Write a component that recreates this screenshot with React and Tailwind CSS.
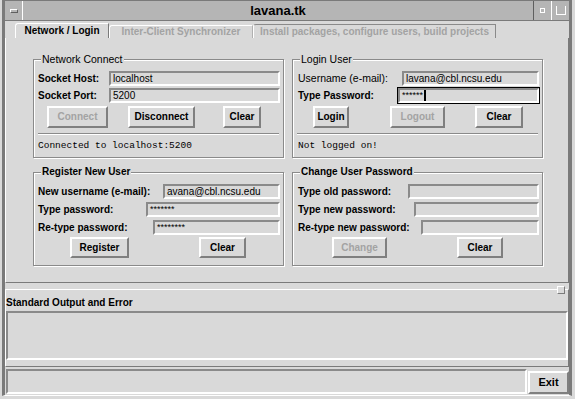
import React from "react";

// raised / sunken Tk-style bevels
const raised = "border-2 border-t-white border-l-white border-b-[#7f7f7f] border-r-[#7f7f7f]";
const sunken = "border-2 border-t-[#8a8a8a] border-l-[#8a8a8a] border-b-white border-r-white";

const Entry = ({ w, value = "", focus = false, dots = false }) => (
  <div className={`${w} h-[17px] p-px ${focus ? "bg-black" : ""}`}>
    <div className={`h-full bg-[#d9d9d9] ${sunken} flex items-center pl-[2px] overflow-hidden whitespace-nowrap`}>
      {dots ? (
        <span className="text-[9px] leading-none self-start mt-[1px]">{value}</span>
      ) : (
        <span className="text-[10px] leading-none">{value}</span>
      )}
      {focus && <span className="ml-[1px] w-[2px] h-[11px] bg-black" />}
    </div>
  </div>
);

const Btn = ({ w, ml, label, disabled = false }) => (
  <div className={`${w} ${ml} h-full bg-[#d9d9d9] ${raised} flex items-center justify-center font-bold text-[10px] ${disabled ? "text-[#a3a3a3]" : "text-black"}`}>
    {label}
  </div>
);

const Row = ({ label, bold = true, children }) => (
  <div className="h-[17px] flex items-center">
    <span className={`flex-1 whitespace-nowrap ${bold ? "font-bold text-[10px]" : "text-[10.5px]"}`}>{label}</span>
    {children}
  </div>
);

const Group = ({ title, bold = false, children }) => (
  <div className="relative border border-[#8a8a8a] shadow-[inset_1px_1px_0_white,1px_1px_0_white] flex flex-col">
    <span className={`absolute left-[7px] -top-[7px] px-px bg-[#d9d9d9] leading-[12px] whitespace-nowrap ${bold ? "font-bold text-[10px]" : "text-[10.5px]"}`}>
      {title}
    </span>
    {children}
  </div>
);

const Separator = () => <div className="mt-[5px] mx-[4px] h-[2px] border-t border-t-[#8a8a8a] border-b border-b-white" />;

export default function App() {
  return (
    <div className="w-[575px] h-[399px] bg-[#d9d9d9] overflow-hidden font-['Liberation_Sans',Arial,sans-serif] text-black leading-none">
      <div className="ml-[2px] w-[570px] h-[396px] border-l-[3px] border-r-[3px] border-t border-[#7a7a7a] border-b border-b-white flex flex-col">
        {/* title bar */}
        <div className="h-[20px] flex bg-[#b5b5b5] border-b border-[#7a7a7a]">
          <div className="w-[18px] border-r border-r-white flex items-center justify-center">
            <div className="w-[8px] h-[4px] border-t border-l border-white border-b border-r border-b-[#5f5f5f] border-r-[#5f5f5f]" />
          </div>
          <div className="flex-1 flex items-center justify-center font-bold text-[13px]">lavana.tk</div>
          <div className="w-[18px] border-l border-l-[#5f5f5f] flex items-center justify-center">
            <div className="w-[5px] h-[5px] border border-white" />
          </div>
          <div className="w-[18px] border-l border-l-white flex items-center justify-center">
            <div className="w-[10px] h-[9px] border-l border-r border-b border-white" />
          </div>
        </div>

        {/* tabs */}
        <div className="h-[17px] flex items-end pl-[10px]">
          <div className="w-[94px] h-[15px] border-t border-l border-white border-r border-r-[#7a7a7a] rounded-tl-[3px] flex items-center justify-center font-bold text-[10px]">
            Network / Login
          </div>
          <div className="w-[144px] h-[13px] border-t border-l border-white border-r border-r-[#b0b0b0] rounded-tl-[3px] flex items-center justify-center font-bold text-[10px] text-[#a3a3a3]">
            Inter-Client Synchronizer
          </div>
          <div className="w-[243px] h-[14px] border-t border-t-[#8a8a8a] border-l border-l-white border-r border-r-[#8a8a8a] rounded-tl-[3px] flex items-center justify-center font-bold text-[10px] text-[#a3a3a3]">
            Install packages, configure users, build projects
          </div>
        </div>

        {/* notebook page */}
        <div className="h-[245px] border-l border-l-white border-r border-r-[#7a7a7a] border-b border-b-[#7a7a7a] pt-[21px] pl-[27px]">
          <div className="grid grid-cols-[251px_251px] grid-rows-[99px_94px] gap-x-[8px] gap-y-[14px]">
            <Group title="Network Connect">
              <div className="pt-[10px] pl-[4px] pr-[2px] flex flex-col">
                <Row label="Socket Host:"><Entry w="w-[173px]" value="localhost" /></Row>
                <Row label="Socket Port:"><Entry w="w-[173px]" value="5200" /></Row>
              </div>
              <div className="mt-[2px] h-[22px] flex">
                <Btn w="w-[61px]" ml="ml-[13px]" label="Connect" disabled />
                <Btn w="w-[67px]" ml="ml-[20px]" label="Disconnect" />
                <Btn w="w-[38px]" ml="ml-[28px]" label="Clear" />
              </div>
              <Separator />
              <div className="mt-[5px] pl-[4px] h-[12px] flex items-center font-['Liberation_Mono',monospace] text-[9.5px]">
                Connected to localhost:5200
              </div>
            </Group>

            <Group title="Login User">
              <div className="pt-[10px] pl-[5px] pr-[2px] flex flex-col">
                <Row label="Username (e-mail):" bold={false}><Entry w="w-[139px]" value="lavana@cbl.ncsu.edu" /></Row>
                <Row label="Type Password:"><Entry w="w-[143px]" value="******" dots focus /></Row>
              </div>
              <div className="mt-[2px] h-[22px] flex">
                <Btn w="w-[36px]" ml="ml-[20px]" label="Login" />
                <Btn w="w-[55px]" ml="ml-[41px]" label="Logout" disabled />
                <Btn w="w-[48px]" ml="ml-[30px]" label="Clear" />
              </div>
              <Separator />
              <div className="mt-[5px] pl-[5px] h-[12px] flex items-center font-['Liberation_Mono',monospace] text-[9.5px]">
                Not logged on!
              </div>
            </Group>

            <Group title="Register New User" bold>
              <div className="pt-[10px] pl-[4px] pr-[2px] flex flex-col gap-[1px]">
                <Row label="New username (e-mail):"><Entry w="w-[119px]" value="avana@cbl.ncsu.edu" /></Row>
                <Row label="Type password:"><Entry w="w-[136px]" value="*******" dots /></Row>
                <Row label="Re-type password:"><Entry w="w-[129px]" value="********" dots /></Row>
              </div>
              <div className="mt-[1px] h-[21px] flex">
                <Btn w="w-[59px]" ml="ml-[36px]" label="Register" />
                <Btn w="w-[47px]" ml="ml-[70px]" label="Clear" />
              </div>
            </Group>

            <Group title="Change User Password" bold>
              <div className="pt-[10px] pl-[5px] pr-[2px] flex flex-col gap-[1px]">
                <Row label="Type old password:"><Entry w="w-[133px]" /></Row>
                <Row label="Type new password:"><Entry w="w-[127px]" /></Row>
                <Row label="Re-type new password:"><Entry w="w-[120px]" /></Row>
              </div>
              <div className="mt-[1px] h-[21px] flex">
                <Btn w="w-[55px]" ml="ml-[39px]" label="Change" disabled />
                <Btn w="w-[46px]" ml="ml-[70px]" label="Clear" />
              </div>
            </Group>
          </div>
        </div>

        {/* pane sash */}
        <div className="relative h-[6px]">
          <div className="absolute right-[4px] top-[3px] w-[8px] h-[8px] bg-[#d9d9d9] border border-t-white border-l-white border-b-[#7a7a7a] border-r-[#7a7a7a] z-10" />
        </div>

        {/* output frame */}
        <div className="h-[78px] border-t border-t-white border-l border-l-white border-b border-b-[#7a7a7a] border-r border-r-[#7a7a7a] flex flex-col">
          <div className="mt-[7px] h-[12px] flex items-center font-bold text-[10px]">Standard Output and Error</div>
          <div className={`mt-[2px] h-[49px] bg-[#d9d9d9] ${sunken}`} />
        </div>

        {/* status row */}
        <div className="h-[28px] flex pt-[2px] pl-px gap-px">
          <div className={`flex-1 h-[25px] bg-[#d9d9d9] ${sunken}`} />
          <div className={`w-[41px] h-[23px] mt-[2px] bg-[#d9d9d9] ${raised} flex items-center justify-center font-bold text-[11px]`}>
            Exit
          </div>
        </div>
      </div>
    </div>
  );
}
